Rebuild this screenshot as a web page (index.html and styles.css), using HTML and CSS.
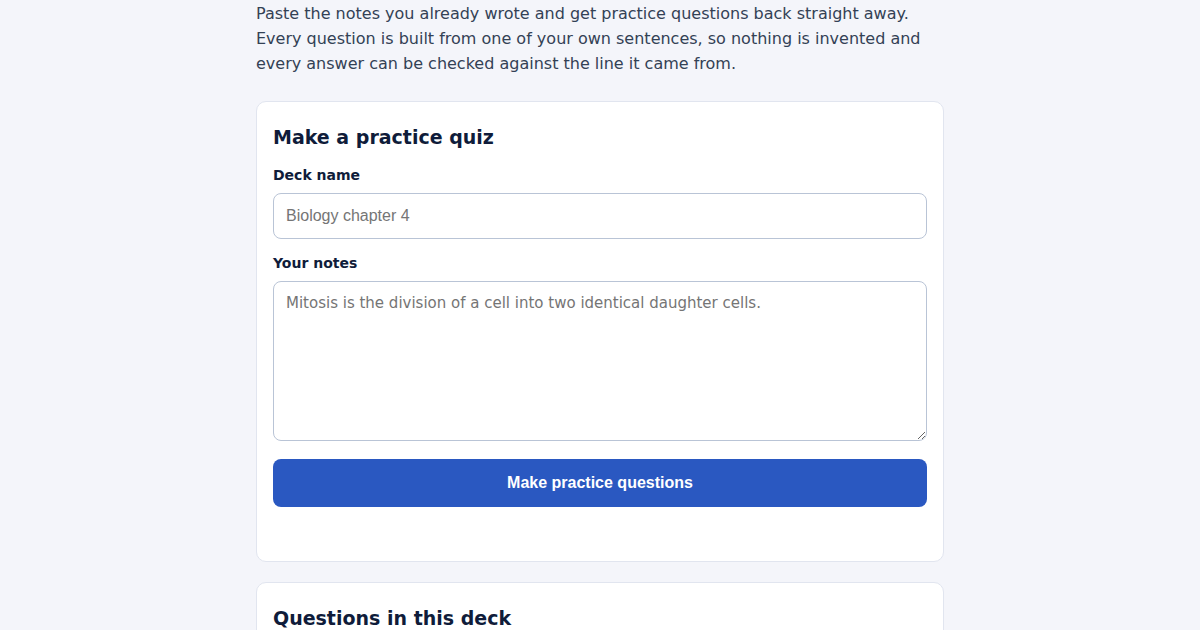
FILE: index.html
```html
<!DOCTYPE html>
<html lang="en">
<head>
<meta charset="utf-8">
<title>Practice quiz</title>
<link rel="stylesheet" href="styles.css">
</head>
<body>
<main class="page">
  <p class="intro">Paste the notes you already wrote and get practice questions back straight away. Every question is built from one of your own sentences, so nothing is invented and every answer can be checked against the line it came from.</p>

  <section class="card">
    <h2 class="card-title">Make a practice quiz</h2>
    <form class="quiz-form">
      <label class="field-label" for="deck">Deck name</label>
      <input class="text-input" id="deck" type="text" placeholder="Biology chapter 4">
      <label class="field-label notes-label" for="notes">Your notes</label>
      <textarea class="notes-input" id="notes" placeholder="Mitosis is the division of a cell into two identical daughter cells."></textarea>
      <button class="primary-btn" type="button">Make practice questions</button>
      <div class="status"></div>
    </form>
  </section>

  <section class="card">
    <h2 class="card-title">Questions in this deck</h2>
  </section>
</main>
</body>
</html>
```

FILE: styles.css
```css
html, body {
  margin: 0;
  padding: 0;
  background: #f4f5fa;
}

body {
  font-family: "DejaVu Sans", sans-serif;
  color: #0f1c3a;
}

.page {
  width: 688px;
  margin: 0 auto;
  padding-top: 1px;
}

.intro {
  margin: 0 0 25px;
  font-size: 16px;
  line-height: 25px;
  color: #334155;
}

.card {
  background: #ffffff;
  border: 1px solid #e1e5ef;
  border-radius: 10px;
  padding: 21px 16px 20px;
  margin-bottom: 20px;
}

.card-title {
  margin: 0 0 14px;
  font-size: 19px;
  line-height: 28px;
  font-weight: bold;
  color: #0f1c3a;
}

.quiz-form {
  display: flex;
  flex-direction: column;
}

.field-label {
  font-size: 14px;
  line-height: 20px;
  font-weight: bold;
  color: #0f1c3a;
  margin-bottom: 8px;
}

.notes-label {
  margin-top: 14px;
}

.text-input {
  box-sizing: border-box;
  height: 46px;
  padding: 0 12px;
  border: 1px solid #b9c4d6;
  border-radius: 8px;
  font-family: "Liberation Sans", Arial, sans-serif;
  font-size: 16px;
  color: #0f1c3a;
  background: #ffffff;
}

.text-input::placeholder {
  color: #757575;
}

.notes-input {
  box-sizing: border-box;
  height: 160px;
  padding: 10px 12px;
  border: 1px solid #b9c4d6;
  border-radius: 8px;
  font-family: "DejaVu Sans", sans-serif;
  font-size: 15px;
  line-height: 22px;
  color: #0f1c3a;
  background: #ffffff;
  resize: vertical;
}

.notes-input::placeholder {
  color: #757575;
}

.primary-btn {
  margin-top: 18px;
  height: 48px;
  border: none;
  border-radius: 8px;
  background: #2a58c1;
  color: #ffffff;
  font-family: "Liberation Sans", Arial, sans-serif;
  font-size: 16px;
  font-weight: bold;
  cursor: pointer;
}

.status {
  min-height: 34px;
}
```
